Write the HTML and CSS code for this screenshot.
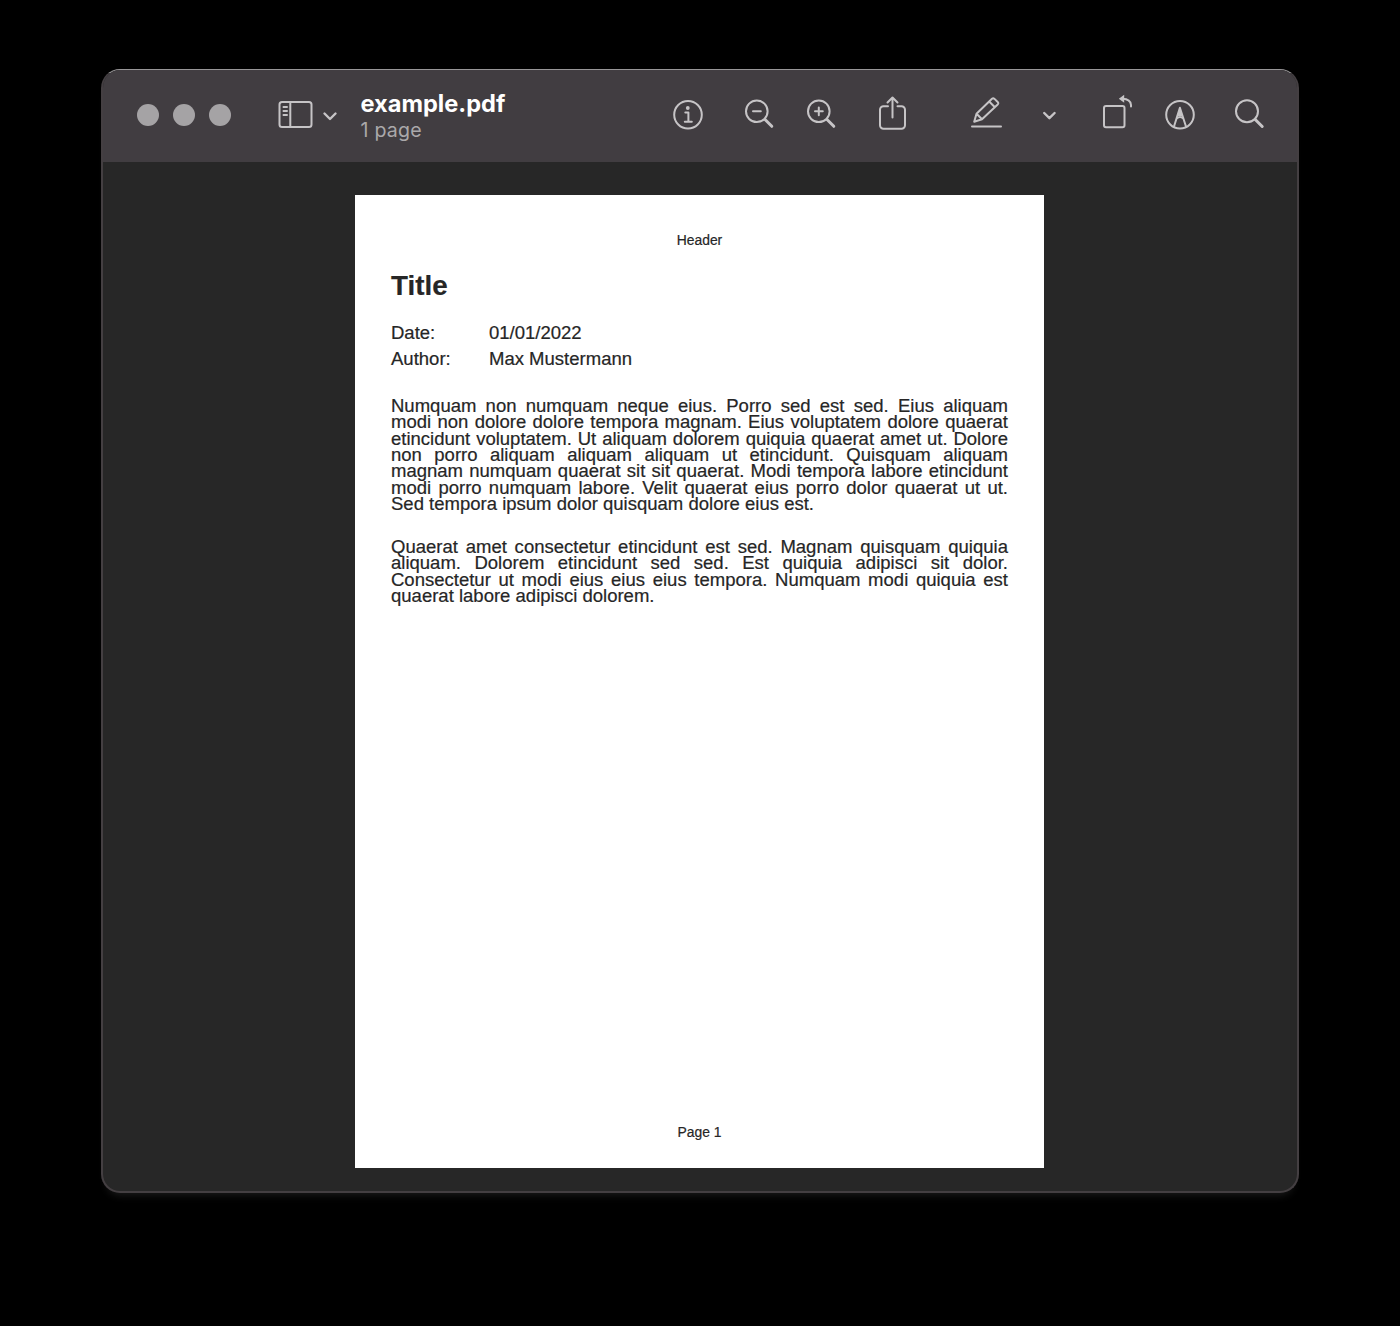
FILE: index.html
```
<!DOCTYPE html>
<html lang="en">
<head>
<meta charset="utf-8">
<title>example.pdf</title>
<link rel="stylesheet" href="styles.css">
</head>
<body>
<main class="window">
  <header class="toolbar">
    <div class="lights"><span class="light"></span><span class="light"></span><span class="light"></span></div>
    <svg class="icon sidebar" viewBox="0 0 64 44">
      <rect x="2.500" y="9" width="32" height="25" rx="2.5"/>
      <path d="M13.300 9v25M6.500 14h3.500M6.500 18h3.500M6.500 22h3.500"/>
      <path class="bold" d="M47.5 20.5l5.500 5.500 5.500-5.500"/>
    </svg>
    <div class="heading">
      <h1 class="filename">example.pdf</h1>
      <p class="pages">1 page</p>
    </div>
    <nav class="tools">
      <svg class="icon info" viewBox="0 0 36 44"><circle cx="18" cy="21.8" r="13.8"/><circle class="dot" cx="17.8" cy="15" r="1.9"/><path d="M15.300 19.500h3.100v8.800M14.800 28.800h7"/></svg>
      <svg class="icon zoom-out" viewBox="0 0 36 44"><circle cx="14.8" cy="18.3" r="10.8"/><path d="M11 18.300h7.800"/><path class="handle" d="M23 26.500l6.800 6.800"/></svg>
      <svg class="icon zoom-in" viewBox="0 0 36 44"><circle cx="14.8" cy="18.3" r="10.8"/><path d="M11 18.300h7.800M14.800 14.400v7.800"/><path class="handle" d="M23 26.500l6.800 6.800"/></svg>
      <svg class="icon share" viewBox="0 0 36 44"><path d="M14 13.300H9.500a3.500 3.500 0 0 0-3.500 3.500V32.200a3.500 3.500 0 0 0 3.500 3.500H27.500a3.500 3.500 0 0 0 3.500-3.500V16.800A3.500 3.500 0 0 0 27.500 13.300h-4M18.500 24.500V5M13.500 9.500l5-5 5 5"/></svg>
      <svg class="icon markup" viewBox="0 0 36 44"><path d="M5.200 28.800l2.300-8L23 5.700q1.200-1 2.500.2l3.200 3.100q1.200 1.200 0 2.400L13 26.300zM20.200 8.500l5.700 5.700M7.500 20.800l5.500 5.500"/><path class="underline" d="M3 33.600h29"/></svg>
      <svg class="icon more" viewBox="0 0 36 44"><path class="bold" d="M12.200 20l5.200 5.200 5.200-5.200"/></svg>
      <svg class="icon rotate" viewBox="0 0 36 44"><rect x="4" y="13" width="20.500" height="21.300" rx="2"/><path d="M31 13.500V12Q30.500 6 22.500 5.800"/><path class="tip" d="M18.800 5.800l5.400-4v8z"/></svg>
      <svg class="icon annotate" viewBox="0 0 36 44"><circle cx="18" cy="21.800" r="13.800"/><path d="M12 33.500l5.900-18.800L24 33.500M15 25.200q3-2.500 6 0"/><path class="tip" d="M17.900 14.500l2.500 8.500h-5z"/></svg>
      <svg class="icon search" viewBox="0 0 36 44"><circle cx="15" cy="18.300" r="11"/><path class="handle" d="M23.200 26.500l7 7"/></svg>
    </nav>
  </header>
  <section class="viewer">
    <article class="page">
      <p class="running">Header</p>
      <h2 class="title">Title</h2>
      <dl class="meta">
        <dt>Date:</dt><dd>01/01/2022</dd>
        <dt>Author:</dt><dd>Max Mustermann</dd>
      </dl>
      <p class="para">
        <span class="line">Numquam non numquam neque eius. Porro sed est sed. Eius aliquam</span>
        <span class="line">modi non dolore dolore tempora magnam. Eius voluptatem dolore quaerat</span>
        <span class="line">etincidunt voluptatem. Ut aliquam dolorem quiquia quaerat amet ut. Dolore</span>
        <span class="line">non porro aliquam aliquam aliquam ut etincidunt. Quisquam aliquam</span>
        <span class="line">magnam numquam quaerat sit sit quaerat. Modi tempora labore etincidunt</span>
        <span class="line">modi porro numquam labore. Velit quaerat eius porro dolor quaerat ut ut.</span>
        <span class="line last">Sed tempora ipsum dolor quisquam dolore eius est.</span>
      </p>
      <p class="para">
        <span class="line">Quaerat amet consectetur etincidunt est sed. Magnam quisquam quiquia</span>
        <span class="line">aliquam. Dolorem etincidunt sed sed. Est quiquia adipisci sit dolor.</span>
        <span class="line">Consectetur ut modi eius eius eius tempora. Numquam modi quiquia est</span>
        <span class="line last">quaerat labore adipisci dolorem.</span>
      </p>
      <p class="running footer">Page 1</p>
    </article>
  </section>
</main>
</body>
</html>
```
FILE: styles.css
```
* { box-sizing: border-box; }
body { margin: 0; height: 1326px; background: #000; padding: 69px 101px 0; overflow: hidden; }
h1, h2, p, dl, dd { margin: 0; }

.window {
  width: 1198px;
  height: 1124px;
  border: 2px solid #443f42;
  border-top: 1px solid #989698;
  border-radius: 19px;
  background: #272727;
  overflow: hidden;
  box-shadow: 0 8px 8px -6px #1c1c1c;
}

.toolbar {
  height: 92px;
  display: flex;
  align-items: flex-start;
  background: #413d41;
  padding-left: 34px;
}
.lights { display: flex; gap: 14px; padding-top: 34px; }
.light { width: 22px; height: 22px; border-radius: 50%; background: #a5a3a5; }

.icon {
  flex: none;
  width: 36px;
  height: 44px;
  margin-top: 23px;
  fill: none;
  stroke: #c6c4c6;
  stroke-width: 2;
  stroke-linecap: round;
  stroke-linejoin: round;
}
.icon .bold { stroke-width: 2.4; }
.icon .handle { stroke-width: 3; }
.icon .underline { stroke-width: 2; }
.icon .dot, .icon .tip { fill: #c6c4c6; stroke: none; }
.sidebar { width: 64px; margin-left: 46px; }

.heading { width: 200px; margin-left: 19.500px; padding-top: 20px; font-family: Inter, sans-serif; }
.filename { font-size: 23.6px; line-height: 28px; font-weight: 700; color: #fff; }
.pages { font-size: 19.6px; line-height: 24px; color: #aaa8aa; letter-spacing: .2px; }

.tools { display: flex; margin-left: 109.500px; }
.zoom-out { margin-left: 36px; }
.zoom-in { margin-left: 26px; }
.share { margin-left: 34px; }
.markup { margin-left: 59px; }
.more { margin-left: 27px; }
.rotate { margin-left: 32px; }
.annotate { margin-left: 26px; }
.search { margin-left: 34px; }

.viewer { display: flex; padding: 33px 0 0 252px; }
.page {
  width: 689px;
  height: 973px;
  display: flex;
  flex-direction: column;
  background: #fff;
  color: #262626;
  padding: 36px 36px 27px;
  font: 18.52px/16.4px "Liberation Sans", Arial, sans-serif;
  -webkit-text-stroke: .2px #262626;
}
.running { font-size: 13.89px; line-height: 18px; text-align: center; }
.title { margin-top: 21px; font-size: 27.78px; line-height: 32px; }
.meta { display: grid; grid-template-columns: 98px 1fr; margin-top: 18px; line-height: 26.2px; }
.para { margin-top: 26.2px; }
.meta + .para { margin-top: 25.3px; }
.line { display: block; white-space: nowrap; text-align: justify; text-align-last: justify; }
.line.last { text-align-last: left; }
.footer { margin-top: auto; }
```
